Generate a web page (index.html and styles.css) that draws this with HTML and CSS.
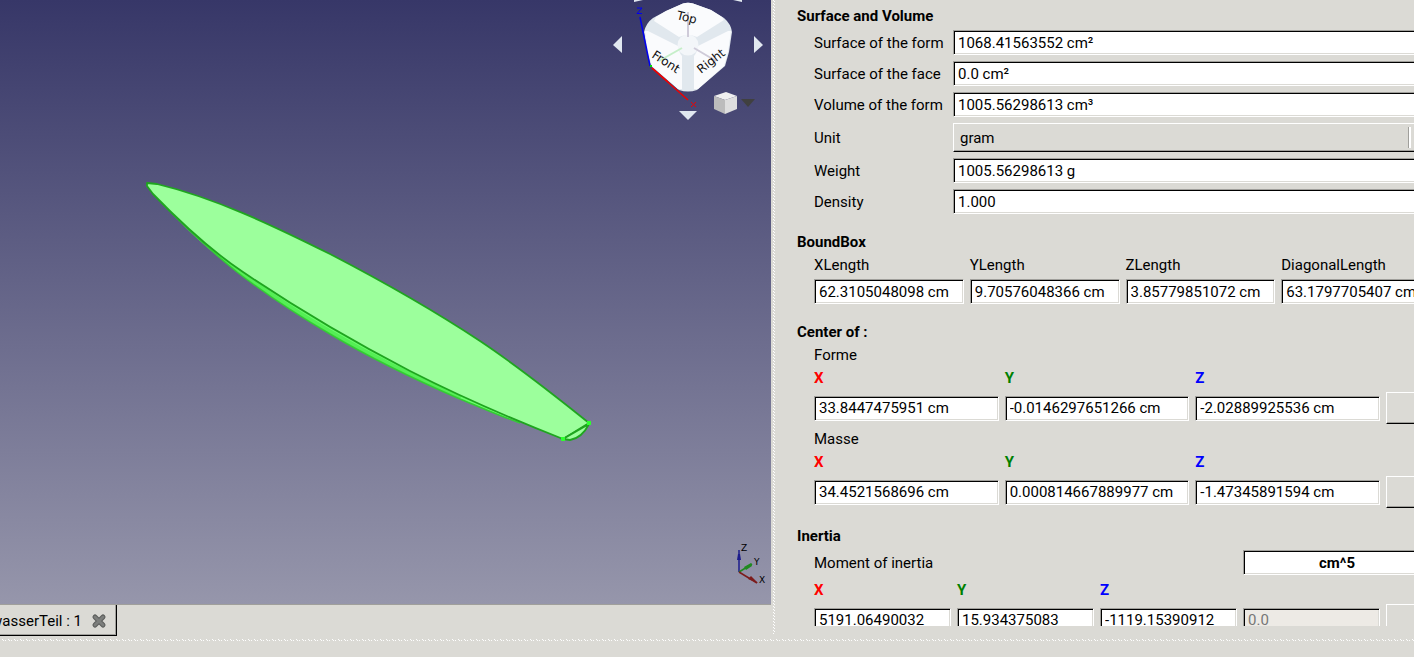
FILE: index.html
```html
<!DOCTYPE html>
<html lang="en">
<head>
<meta charset="utf-8">
<title>Shape information</title>
<link rel="stylesheet" href="styles.css">
</head>
<body>
<div class="app">
  <main class="workspace">
    <section class="document">
      <div class="viewport">
        <svg class="model" viewBox="0 0 771 604" preserveAspectRatio="xMinYMin meet" role="img" aria-label="Hull model">
          <path fill="#6cff6c" d="M160 201C185 227 211 251 237 272C267 295 299 316 330 334C372 359 416 380 460 399C480 407 500 416 520 423L410 371L326 325L243 272Z"/>
          <path fill="none" stroke="#55ee55" stroke-width="4" d="M185 224C203 242 220 256 238 270C268 293 300 314 331 332C373 357 416 378 461 397"/>
          <path fill="none" stroke="#34cc34" stroke-width="1.500" d="M160 201C185 227 211 251 237 272C267 295 299 316 330 334C372 359 416 380 460 399C480 407 500 416 520 423"/>
          <path fill="#9cff9c" stroke="#1fa51f" stroke-width="1.800" stroke-linejoin="round" d="M147 183L157 184C215 198 272 225 330 254C380 280 430 308 480 341C516 365 553 394 589 423L563 439C512 419 461 397 410 371C354 342 299 310 243 272C213 252 183 225 153 194L147 186Z"/>
          <path fill="#9cff9c" stroke="#1fa51f" stroke-width="1.800" d="M563 439L570 440Q582 438 589 424Z"/>
          <path fill="#2dff2d" d="M561 437h4v4h-4zM587 421h4v4h-4z"/>
        </svg>
        <svg class="navcube" viewBox="611 0 160 125" width="160" height="125" role="img" aria-label="Navigation cube">
          <g fill="#e1e8f0">
            <path d="M613 45L622 36V53Z"/>
            <path d="M763 45L754 36V53Z"/>
            <path d="M679 111H697L688 120Z"/>
            <path d="M634 2V0H643Z"/>
            <path d="M742 2V0H733Z"/>
          </g>
          <path stroke="#f00000" stroke-width="1.500" d="M652 68L688 100"/>
          <path fill="#e1e8ee" d="M683 3.500Q688 2 693 3.500L711 10L724 18Q731 24 732 32L729 52L725 66L697 90Q688 93 679 90L651 66L647 52L644 32Q646 23 653 18L666 11Z"/>
          <g fill="#fafbfd">
            <path d="M683 3.500Q688 2 693 3.500L711 10L722 17L724 20L697 37Q688 33 679 37L654 21L656 17L666 11Z"/>
            <path d="M645 31L648 31L678 46Q679 53 682 56V89L678 89L652 66L648 52Z"/>
            <path d="M731 31L728 31L698 46Q697 53 694 56V89L698 89L724 66L728 52Z"/>
          </g>
          <circle cx="688" cy="45" r="10.500" fill="#f3f6f9"/>
          <g fill="none" stroke-width="2">
            <path stroke="#cfcbd9" d="M688 12V37M694 48L716 61"/>
            <path stroke="#c6efc9" d="M682 48L659 61"/>
          </g>
          <g class="face-name">
            <text transform="translate(676 19) rotate(14)">Top</text>
            <text transform="translate(651 57) rotate(33)">Front</text>
            <text transform="translate(701 74) rotate(-38)">Right</text>
          </g>
          <path stroke="#0000f0" stroke-width="1.500" d="M640 17L650 66"/>
          <path stroke="#f00000" stroke-width="1.500" d="M652 68L668 82"/>
          <path fill="#00e000" d="M650 65h2v2h-2z"/>
          <path fill="none" stroke="#0000f0" d="M637 8H642L637 13.500H642"/>
          <path fill="none" stroke="#f00000" d="M691 102L696 107M696 102L691 107"/>
          <path fill="#efefef" d="M726 92L737 96L725 100L714 96Z"/>
          <path fill="#bcbcbc" d="M714 96L725 100V114L714 109Z"/>
          <path fill="#dedede" d="M737 96L725 100V114L737 109Z"/>
          <path fill="#404040" d="M741 99H755L748 107Z"/>
        </svg>
        <svg class="axes" viewBox="731 540 40 50" width="40" height="50" role="img" aria-label="Axis directions">
          <path stroke="#1c1c8c" stroke-width="1.500" d="M739 572V550"/>
          <path fill="#1c1c8c" d="M737 560L738 554H740L741 560Z"/>
          <path stroke="#1f8a1f" stroke-width="1.500" d="M739 572L752 564"/>
          <path fill="#1f8a1f" d="M744 567L751 563L752 566L746 570Z"/>
          <path stroke="#7c1c1c" stroke-width="1.500" d="M739 572L757 583"/>
          <path fill="#7c1c1c" d="M748 579L751 576L758 583Z"/>
          <g class="axis-name">
            <text x="741" y="551">Z</text>
            <text x="754" y="565">Y</text>
            <text x="759" y="583">X</text>
          </g>
        </svg>
      </div>
      <div class="tabs">
        <div class="tab">
          <span class="tab-title">wasserTeil : 1</span>
          <button class="tab-close" type="button" aria-label="Close">
            <svg viewBox="0 0 16 16" width="16" height="16"><path d="M4 4L12 12M12 4L4 12" stroke="#5a5c5a" stroke-width="5" stroke-linecap="round"/><path d="M4 4L12 12M12 4L4 12" stroke="#7c7e7c" stroke-width="3" stroke-linecap="round"/></svg>
          </button>
        </div>
      </div>
    </section>
    <div class="splitter"></div>
    <aside class="panel">
      <form class="info">
        <h2>Surface and Volume</h2>
        <div class="pairs">
          <label for="surface">Surface of the form</label><input id="surface" value="1068.41563552 cm²">
          <label for="face">Surface of the face</label><input id="face" value="0.0 cm²">
          <label for="volume">Volume of the form</label><input id="volume" value="1005.56298613 cm³">
          <label for="unit">Unit</label><span class="combo"><select id="unit"><option>gram</option></select></span>
          <label for="weight">Weight</label><input id="weight" value="1005.56298613 g">
          <label for="density">Density</label><input id="density" value="1.000">
        </div>

        <h2>BoundBox</h2>
        <div class="grid four">
          <label for="xl">XLength</label><label for="yl">YLength</label><label for="zl">ZLength</label><label for="dl">DiagonalLength</label>
          <input id="xl" value="62.3105048098 cm"><input id="yl" value="9.70576048366 cm"><input id="zl" value="3.85779851072 cm"><input id="dl" value="63.1797705407 cm">
        </div>

        <h2>Center of :</h2>
        <p>Forme</p>
        <div class="grid center">
          <label class="x" for="fx">X</label><label class="y" for="fy">Y</label><label class="z" for="fz">Z</label><span></span>
          <input id="fx" value="33.8447475951 cm"><input id="fy" value="-0.0146297651266 cm"><input id="fz" value="-2.02889925536 cm"><button type="button" class="push" aria-label="Create point"></button>
        </div>
        <p>Masse</p>
        <div class="grid center">
          <label class="x" for="mx">X</label><label class="y" for="my">Y</label><label class="z" for="mz">Z</label><span></span>
          <input id="mx" value="34.4521568696 cm"><input id="my" value="0.000814667889977 cm"><input id="mz" value="-1.47345891594 cm"><button type="button" class="push" aria-label="Create point"></button>
        </div>

        <h2>Inertia</h2>
        <div class="grid inertia">
          <label class="wide" for="moment">Moment of inertia</label><input class="unit" id="moment" value="cm^5">
          <label class="x" for="ix">X</label><label class="y" for="iy">Y</label><label class="z" for="iz">Z</label><span></span><span></span>
          <input id="ix" value="5191.06490032"><input id="iy" value="15.934375083"><input id="iz" value="-1119.15390912"><input value="0.0" disabled aria-label="Total"><button type="button" class="push" aria-label="Create axis"></button>
        </div>
      </form>
    </aside>
  </main>
  <footer class="statusbar"></footer>
</div>
</body>
</html>
```
FILE: styles.css
```css
* { box-sizing: border-box; }

body {
  margin: 0;
  background: #dbdad5;
  color: #000;
  font: 15px/19px Roboto, "Noto Sans", sans-serif;
}

.app {
  display: flex;
  flex-direction: column;
  height: 100vh;
  overflow: hidden;
}

.workspace {
  display: flex;
  flex: 1;
  min-height: 0;
}

.document {
  display: flex;
  flex: 1;
  flex-direction: column;
  min-width: 0;
}

.viewport {
  position: relative;
  flex: 1;
  min-height: 0;
  overflow: hidden;
  border-bottom: 1px solid #a09f9b;
  background: linear-gradient(#373768, #9696ab);
}

.model { display: block; width: 100%; }
.navcube { position: absolute; top: 0; right: 0; }
.axes { position: absolute; right: 0; bottom: 14px; }

.face-name { font: 12px "DejaVu Sans", sans-serif; fill: #111; }
.axis-name { font: 9px "DejaVu Sans", sans-serif; fill: #000; }

.tabs { display: flex; height: 31px; }

.tab {
  display: flex;
  align-items: center;
  justify-content: flex-end;
  gap: 9px;
  width: 117px;
  padding-top: 2px;
  padding-right: 9px;
  overflow: hidden;
  white-space: nowrap;
  border-right: 1px solid #000;
  border-bottom: 1px solid #000;
  box-shadow: inset -1px -1px #a09f9b;
}

.tab-close {
  display: flex;
  padding: 0;
  border: 0;
  background: none;
}

.splitter {
  width: 7px;
  margin-bottom: 2px;
  background:
    conic-gradient(from 270deg at 1px 1px, #fff 90deg, transparent 0) 2px 0 / 7px 3px,
    conic-gradient(from 270deg at 1px 1px, #fff 90deg, transparent 0) 3px 1px / 7px 3px;
}

.panel {
  width: 636px;
  margin-bottom: 10px;
  overflow: hidden;
}

.info { width: 653px; padding: 7px 0 0 19px; }

h2, p, label { height: 17px; }

h2 {
  margin: 19px 0 6px;
  font-size: 15px;
  font-weight: 700;
}

h2:first-child { margin-top: 0; }

p { margin: 0 0 6px 17px; }
.grid + p { margin-top: 6px; }

.pairs, .grid {
  display: grid;
  gap: 6px;
  align-items: center;
  padding-left: 17px;
  white-space: nowrap;
}

.pairs { grid-template-columns: 133px 1fr; }
.four { grid-template-columns: repeat(4, 1fr); }
.center { grid-template-columns: repeat(3, 1fr) 45px; }
.inertia { grid-template-columns: repeat(4, 1fr) 45px; }

.wide { grid-column: span 3; }
.unit { grid-column: span 2; font-weight: 700; text-align: center; }

.x, .y, .z { font-weight: 700; }
.x { color: #f00; }
.y { color: #008000; }
.z { color: #00f; }

input {
  width: 100%;
  min-width: 0;
  height: 25px;
  padding: 0 4px;
  border: 1px solid;
  border-color: #a09f9b #fff #fff #a09f9b;
  border-radius: 0;
  background: #fff;
  box-shadow: inset 1px 1px #000, inset -1px -1px #dbdad5;
  color: #000;
  font-family: inherit;
  font-size: 15px;
}

input:disabled { background: #edeae5; color: #777; }

.combo { position: relative; display: block; height: 29px; }

.combo::after {
  content: "";
  position: absolute;
  top: 4px;
  right: 20px;
  width: 2px;
  height: 21px;
  border-left: 1px solid #a09f9b;
  background: #fff;
}

select, .push {
  width: 100%;
  border: 1px solid;
  border-color: #fff #000 #000 #fff;
  border-radius: 0;
  background: #dbdad5;
  box-shadow: inset -1px -1px #a09f9b;
}

select {
  height: 29px;
  padding: 1px 6px 0;
  appearance: none;
  color: #000;
  font: inherit;
}

.push { height: 32px; }

.statusbar {
  height: 21px;
  background:
    conic-gradient(from 270deg at 1px 1px, #fff 90deg, transparent 0) 2px 3px / 6px 30px,
    conic-gradient(from 270deg at 1px 1px, #fff 90deg, transparent 0) 3px 4px / 6px 30px,
    conic-gradient(from 270deg at 1px 1px, #fff 90deg, transparent 0) 5px 4px / 6px 30px;
}
```
